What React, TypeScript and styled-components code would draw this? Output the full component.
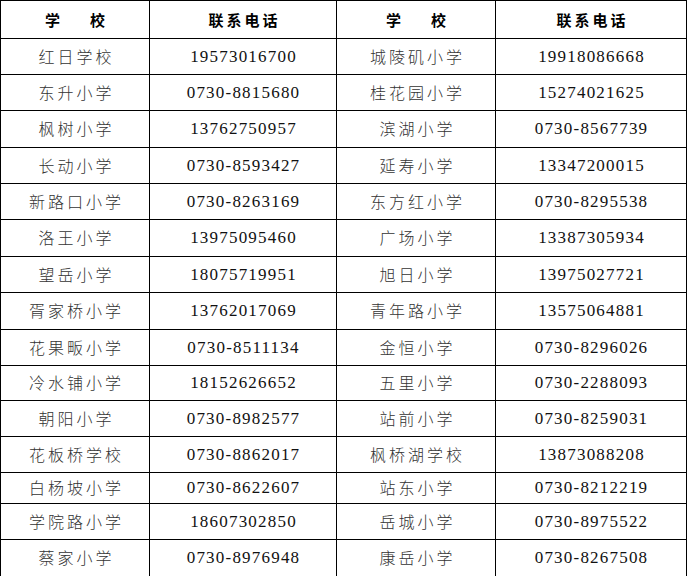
import styled, { createGlobalStyle } from "styled-components";

const GlobalStyle = createGlobalStyle`
  html, body {
    margin: 0;
    padding: 0;
    background: #fff;
    overflow: hidden;
  }
`

type Row = [string, string, string, string]

const rows: Row[] = [
    ["红日学校", "19573016700", "城陵矶小学", "19918086668"],
    ["东升小学", "0730-8815680", "桂花园小学", "15274021625"],
    ["枫树小学", "13762750957", "滨湖小学", "0730-8567739"],
    ["长动小学", "0730-8593427", "延寿小学", "13347200015"],
    ["新路口小学", "0730-8263169", "东方红小学", "0730-8295538"],
    ["洛王小学", "13975095460", "广场小学", "13387305934"],
    ["望岳小学", "18075719951", "旭日小学", "13975027721"],
    ["胥家桥小学", "13762017069", "青年路小学", "13575064881"],
    ["花果畈小学", "0730-8511134", "金恒小学", "0730-8296026"],
    ["冷水铺小学", "18152626652", "五里小学", "0730-2288093"],
    ["朝阳小学", "0730-8982577", "站前小学", "0730-8259031"],
    ["花板桥学校", "0730-8862017", "枫桥湖学校", "13873088208"],
    ["白杨坡小学", "0730-8622607", "站东小学", "0730-8212219"],
    ["学院路小学", "18607302850", "岳城小学", "0730-8975522"],
    ["蔡家小学", "0730-8976948", "康岳小学", "0730-8267508"],
]

// cell heights between the ruled lines
const heights = [35, 35, 36, 35, 35, 36, 35, 36, 35, 34, 35, 35, 30, 35, 36]

export default function App() {
    return (
        <>
            <GlobalStyle />
            <Table>
                <TableRow $h={37}>
                    <HeadCell $spacing={0}>学　　校</HeadCell>
                    <HeadCell $spacing={3}>联系电话</HeadCell>
                    <HeadCell $spacing={0}>学　　校</HeadCell>
                    <HeadCell $spacing={3}>联系电话</HeadCell>
                </TableRow>
                {rows.map((r, i) => (
                    <TableRow key={i} $h={heights[i]}>
                        <NameCell>{r[0]}</NameCell>
                        <PhoneCell>{r[1]}</PhoneCell>
                        <NameCell>{r[2]}</NameCell>
                        <PhoneCell>{r[3]}</PhoneCell>
                    </TableRow>
                ))}
            </Table>
        </>
    )
}

const Table = styled.div`
    display: flex;
    flex-direction: column;
    gap: 1px;
    width: 687px;
    padding: 1px 0;
    background: #000;
`

const TableRow = styled.div<{ $h: number }>`
    display: grid;
    grid-template-columns: 148px 186px 158px 190px;
    column-gap: 1px;
    padding: 0 1px;
    height: ${p => p.$h}px;
`

const Cell = styled.div`
    background: #fff;
    display: flex;
    align-items: center;
    justify-content: center;
    white-space: nowrap;
`

const HeadCell = styled(Cell)<{ $spacing: number }>`
    font-family: "Noto Sans CJK SC", sans-serif;
    font-size: 15px;
    font-weight: 700;
    letter-spacing: ${p => p.$spacing}px;
    padding-left: ${p => p.$spacing}px;
    padding-bottom: 1px;
    color: #000;
`

const NameCell = styled(Cell)`
    font-family: "Noto Sans CJK SC", sans-serif;
    font-size: 16px;
    font-weight: 300;
    letter-spacing: 3px;
    padding-left: 3px;
    padding-bottom: 2px;
    color: #333;
`

const PhoneCell = styled(Cell)`
    font-family: "Liberation Serif", serif;
    font-size: 17px;
    letter-spacing: 1.2px;
    padding-left: 1px;
    color: #111;
`
